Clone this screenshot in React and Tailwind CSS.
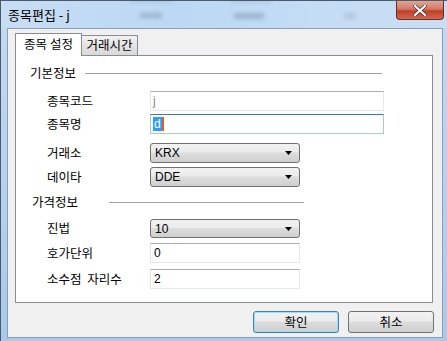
import React from "react";

const font = { fontFamily: '"Noto Sans CJK KR", "Liberation Sans", sans-serif' };
const latin = { fontFamily: '"Liberation Sans", "Noto Sans CJK KR", sans-serif' };

function TextInput({ value, gray, focused, selected }) {
  return (
    <div
      className={
        "shrink-0 h-[20px] w-[234px] bg-white border flex items-center pl-[2px] text-[12px] leading-none " +
        (focused
          ? "border-[#a4c9e3] border-t-[#3d7bad]"
          : "border-[#e3e9ef] border-t-[#abadb3] border-l-[#e2e3ea]")
      }
      style={latin}
    >
      {selected ? (
        <span className="flex items-center">
          <span className="bg-[#3399ff] text-white px-[1px] h-[14px] flex items-center">{value}</span>
          <span className="w-[2px] h-[14px] bg-[#d9651b]" />
        </span>
      ) : (
        <span className={gray ? "text-[#8a8a8a]" : "text-black"}>{value}</span>
      )}
    </div>
  );
}

function NumInput({ value }) {
  return (
    <div
      style={latin}
      className="shrink-0 h-[20px] w-[150px] bg-white border border-[#e3e9ef] border-t-[#abadb3] border-l-[#e2e3ea] flex items-center pl-[3px] text-[12px] leading-none text-black"
    >
      {value}
    </div>
  );
}

function Select({ value, h = "h-[20px]" }) {
  return (
    <div
      style={latin}
      className={
        h +
        " shrink-0 w-[150px] rounded-[3px] border border-[#707070] flex items-center justify-between pl-[4px] pr-[7px] text-[12px] leading-none text-black bg-[linear-gradient(to_bottom,#f2f2f2_0%,#ebebeb_45%,#dddddd_50%,#cfcfcf_100%)]"
      }
    >
      <span>{value}</span>
      <svg width="7" height="4" viewBox="0 0 7 4">
        <path d="M0 0 H7 L3.5 4 Z" fill="#000" />
      </svg>
    </div>
  );
}

function Row({ label, children, className }) {
  return (
    <div className={"flex items-center " + className}>
      <div className="shrink-0 ml-[31px] w-[103px] text-[12.5px] leading-none text-black whitespace-nowrap [word-spacing:3px]">{label}</div>
      {children}
    </div>
  );
}

function Button({ children, def }) {
  return (
    <div
      className={
        "w-[86px] h-[22px] rounded-[3px] border flex items-center justify-center text-[12.5px] leading-none text-black bg-[linear-gradient(to_bottom,#f2f2f2_0%,#ebebeb_45%,#dddddd_50%,#cfcfcf_100%)] " +
        (def ? "border-[#3c7fb1] shadow-[inset_0_0_0_1px_#9fdcf9]" : "border-[#707070]")
      }
    >
      {children}
    </div>
  );
}

export default function App() {
  return (
    <div
      style={font}
      className="w-[447px] h-[341px] flex flex-col border border-[#4a5a6c] border-r-0 border-b-0 bg-[linear-gradient(to_bottom,#c3dbf3,#a9c9ec)] overflow-hidden"
    >
      {/* title bar */}
      <div className="relative h-[27px] flex items-start justify-between shrink-0 bg-[linear-gradient(to_right,#c7ddf3,#bcd8f4_40%,#c4dcf4_70%,#c9def3)]">
        <span className="absolute left-[139px] top-[12px] w-[22px] h-[5px] bg-[#8ea3bb] blur-[2px] opacity-70" />
        <span className="absolute left-[233px] top-[12px] w-[30px] h-[6px] bg-[#8ea3bb] blur-[2px] opacity-70" />
        <span className="absolute left-[343px] top-[12px] w-[12px] h-[6px] bg-[#a5b7cb] blur-[2px] opacity-60" />
        <span className="absolute left-[130px] top-[-2px] w-[40px] h-[3px] bg-[#8ea3bb] blur-[2px] opacity-50" />
        <span className="absolute left-[230px] top-[-2px] w-[40px] h-[3px] bg-[#8ea3bb] blur-[2px] opacity-50" />
        <div className="relative pl-[7px] pt-[7px] text-[13px] leading-none text-black">종목편집 - j</div>
        <div className="relative mr-[3px] w-[48px] h-[19px] rounded-b-[4px] border border-t-0 border-[#6b2a22] bg-[linear-gradient(to_bottom,#e3a595_0%,#d27866_45%,#c03f26_55%,#d0694f_100%)] flex items-center justify-center">
          <svg width="14" height="11" viewBox="0 0 14 11">
            <path d="M2 1 L12 10 M12 1 L2 10" stroke="#4a2a2a" strokeWidth="3.6" strokeLinecap="square" />
            <path d="M2 1 L12 10 M12 1 L2 10" stroke="#ffffff" strokeWidth="2.2" strokeLinecap="square" />
          </svg>
        </div>
      </div>

      {/* client area */}
      <div className="ml-[6px] mr-[4px] mb-[3px] flex-1 border border-[#8c9eb3] bg-[#f0f0f0] flex flex-col pl-[7px] pr-[9px] pt-[4px]">
        {/* tabs */}
        <div className="flex items-end h-[22px] relative z-10">
          <div className="h-[23px] w-[67px] -mb-[1px] bg-white border border-b-0 border-[#898c95] flex items-start justify-center pt-[4px] text-[12.5px] leading-none text-black">
            종목 설정
          </div>
          <div className="h-[20px] w-[56px] border border-l-0 border-b-0 border-[#898c95] bg-[linear-gradient(to_bottom,#f2f2f2,#e3e3e3_50%,#d9d9d9)] flex items-center justify-center text-[12.5px] leading-none text-black">
            거래시간
          </div>
        </div>
        {/* panel */}
        <div className="h-[248px] bg-white border border-[#898c95] flex flex-col">
          <div className="mt-[9px] h-[16px] flex items-center ml-[14px]">
            <span className="shrink-0 w-[55px] text-[12.5px] leading-none text-black whitespace-nowrap">기본정보</span>
            <span className="w-[297px] h-px bg-[#a0a0a0]" />
          </div>
          <Row label="종목코드" className="mt-[10px]">
            <TextInput value="j" gray />
          </Row>
          <Row label="종목명" className="mt-[3px]">
            <TextInput value="d" focused selected />
          </Row>
          <Row label="거래소" className="mt-[9px]">
            <Select value="KRX" />
          </Row>
          <Row label="데이타" className="mt-[4px]">
            <Select value="DDE" />
          </Row>
          <div className="mt-[7px] h-[16px] flex items-center ml-[16px]">
            <span className="shrink-0 w-[77px] text-[12.5px] leading-none text-black whitespace-nowrap">가격정보</span>
            <span className="w-[195px] h-px bg-[#a0a0a0]" />
          </div>
          <Row label="진법" className="mt-[9px]">
            <Select value="10" h="h-[19px]" />
          </Row>
          <Row label="호가단위" className="mt-[5px]">
            <NumInput value="0" />
          </Row>
          <Row label="소수점 자리수" className="mt-[6px]">
            <NumInput value="2" />
          </Row>
        </div>
        {/* buttons */}
        <div className="flex justify-end gap-[9px] mt-[8px] mr-[-1px]">
          <Button def>확인</Button>
          <Button>취소</Button>
        </div>
      </div>
    </div>
  );
}
